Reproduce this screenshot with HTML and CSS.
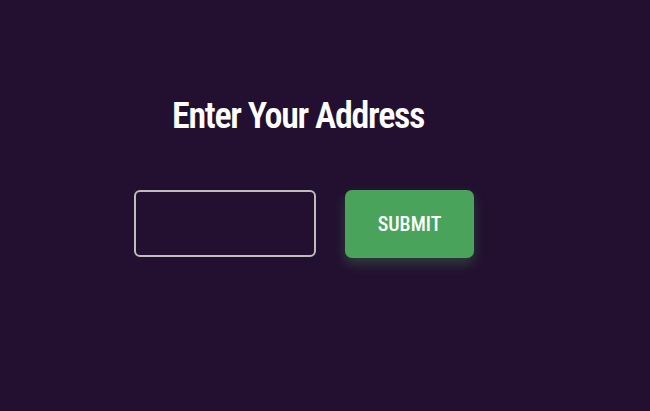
FILE: index.html
```html
<!DOCTYPE html>
<html>
<head>
<meta charset="utf-8">
<link rel="stylesheet" href="styles.css">
</head>
<body>
<main class="page">
  <h1 class="title">Enter Your Address</h1>
  <form class="form">
    <input class="field" type="text" aria-label="Address">
    <button class="submit" type="button">SUBMIT</button>
  </form>
</main>
</body>
</html>
```
FILE: styles.css
```css
html, body {
  margin: 0;
  padding: 0;
  background: #231030;
  height: 100%;
}
.page {
  display: flex;
  flex-direction: column;
  align-items: flex-start;
  padding-top: 92px;
  padding-left: 134px;
  font-family: Roboto, "Liberation Sans", sans-serif;
}
.title {
  margin: 0 0 0 38px;
  color: #fff;
  font-size: 36px;
  font-weight: 600;
  line-height: 48px;
  font-stretch: 85%;
  letter-spacing: -1.3px;
}
.form {
  display: flex;
  gap: 29px;
  margin-top: 50px;
}
.field {
  box-sizing: border-box;
  width: 182px;
  height: 67px;
  border: 2px solid #bdbdbd;
  border-radius: 6px;
  background: transparent;
  outline: none;
}
.submit {
  box-sizing: border-box;
  width: 129px;
  height: 68px;
  border: none;
  border-radius: 7px;
  background: #4aa35a;
  color: #fff;
  font-family: Roboto, "Liberation Sans", sans-serif;
  font-size: 20px;
  font-weight: 500;
  font-stretch: 85%;
  box-shadow: 0 6px 12px rgba(74, 163, 90, 0.3);
}
```
